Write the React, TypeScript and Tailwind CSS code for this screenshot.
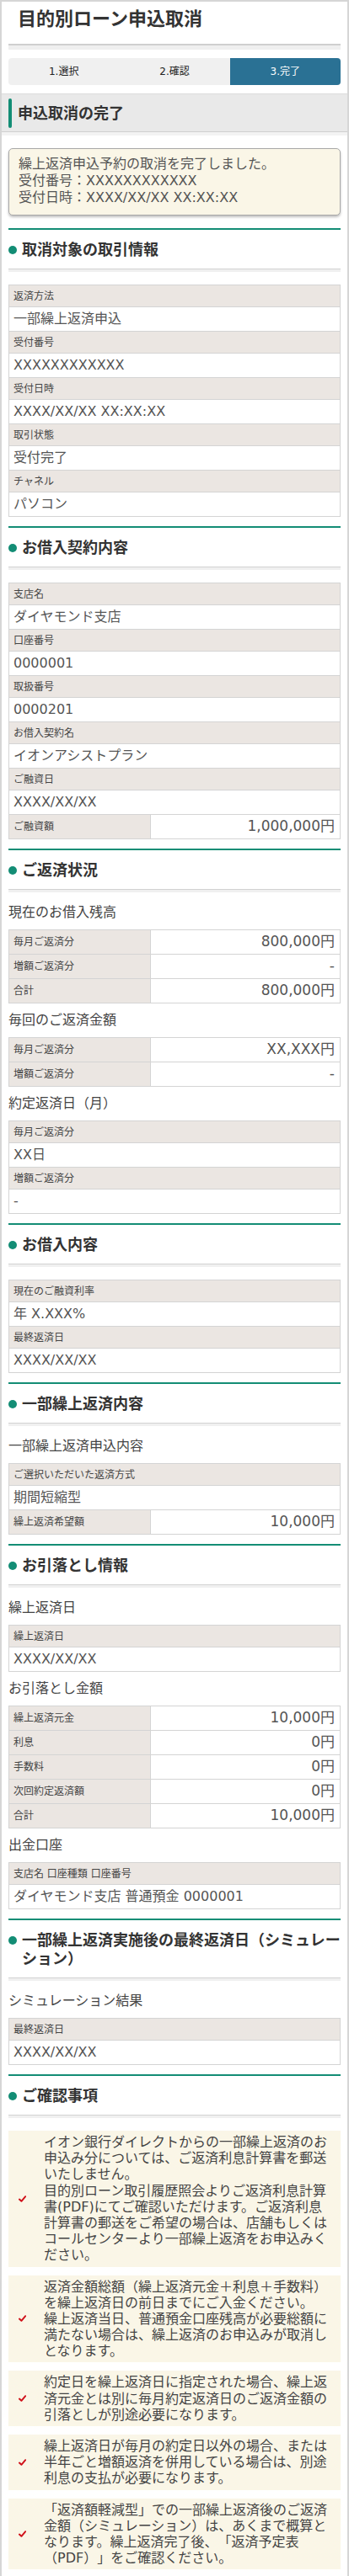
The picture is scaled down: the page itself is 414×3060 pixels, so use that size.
import React from "react";

type Row = { label: string; value: string; inline?: boolean };

const InfoTable = ({ rows, className = "" }: { rows: Row[]; className?: string }) => (
  <div className={`border-x border-t border-[#d4d4d4] ${className}`}>
    {rows.map((row, i) =>
      row.inline ? (
        <div key={i} className="flex h-[29px] border-b border-[#d4d4d4]">
          <div className="flex w-[168px] shrink-0 items-center border-r border-[#d4d4d4] bg-[#ebe6e2] px-[5px] text-[12px] text-[#444]">
            {row.label}
          </div>
          <div className="flex flex-1 items-center justify-end bg-white pr-[6px] text-[17px] text-[#555]">
            {row.value}
          </div>
        </div>
      ) : (
        <div key={i}>
          <div className="flex h-[26px] items-center border-b border-[#d4d4d4] bg-[#ebe6e2] px-[5px] text-[12px] text-[#444]">
            {row.label}
          </div>
          <div className="flex h-[29px] items-center border-b border-[#d4d4d4] bg-white px-[5px] text-[16px] text-[#555]">
            {row.value}
          </div>
        </div>
      )
    )}
  </div>
);

const Heading = ({ title, gap = "mt-[11px]" }: { title: React.ReactNode; gap?: string }) => (
  <div className={gap}>
    <div className="h-[2px] bg-[#138d75]" />
    <div className="flex items-start gap-[6px] border-b border-[#d2d2d2] pt-[13px] pb-[11px]">
      <span className="mt-[6px] size-[10px] shrink-0 rounded-full bg-[#138d75]" />
      <h2 className="-mr-[4px] text-[18px] font-bold leading-[22px] text-[#333]">{title}</h2>
    </div>
    <div className="h-[3px] bg-[#f0f0f0]" />
  </div>
);

const Sub = ({ children, first = false }: { children: React.ReactNode; first?: boolean }) => (
  <p className={`${first ? "mt-3" : "mt-2"} mb-2 text-[16px] leading-6 text-[#444]`}>{children}</p>
);

const Check = () => (
  <svg width="9" height="8" viewBox="0 0 9 8" className="shrink-0">
    <path d="M1 4.6 L3.4 6.8 L8.2 1.2" fill="none" stroke="#d0121b" strokeWidth="2" strokeLinecap="round" strokeLinejoin="round" />
  </svg>
);

const Note = ({ children }: { children: React.ReactNode }) => (
  <div className="flex items-center bg-[#faf6e7] py-1 pl-[12px] pr-[14px]">
    <Check />
    <p className="ml-[21px] text-[16px] leading-[1.2] text-[#444]">{children}</p>
  </div>
);

const steps = ["1.選択", "2.確認", "3.完了"];

export default function App() {
  return (
    <div className="min-h-screen bg-white font-['DejaVu_Sans','Noto_Sans_CJK_JP',sans-serif] [text-spacing-trim:space-all]">
      <div className="border-2 border-[#d6d6d6] px-2 pb-[13px]">
        {/* page title */}
        <h1 className="border-b-2 border-[#cfcfcf] pt-[6px] pb-[14px] pl-[11px] text-[22px] font-bold leading-[30px] text-[#333]">
          目的別ローン申込取消
        </h1>
        <div className="h-[5px] bg-[#efefef]" />

        {/* steps */}
        <div className="mt-[10px] grid h-[32px] grid-cols-3 overflow-hidden rounded-[4px] bg-[#f0f0f0] text-[12px]">
          {steps.map((s, i) => (
            <div
              key={s}
              className={`flex items-center justify-center ${i === 2 ? "bg-[#2a7194] text-white" : "text-[#222]"}`}
            >
              {s}
            </div>
          ))}
        </div>

        {/* complete band */}
        <div className="-mx-2 mt-[10px]">
          <div className="flex h-[46px] items-center border-y border-t-[#dcdcdc] border-b-[#d0d0d0] bg-[#e9e9e9]">
            <span className="ml-2 h-[35px] w-[4px] rounded-full bg-[#138d75]" />
            <h2 className="ml-[7px] text-[18px] font-bold text-[#333]">申込取消の完了</h2>
          </div>
          <div className="h-[4px] bg-[#f3f3f3]" />
        </div>

        <div className="mt-[15px] rounded-[5px] border border-[#a8a8a8] bg-[#faf6e7] px-[11px] pt-2 pb-[10px] text-[16px] leading-5 text-[#555] shadow-[0_2px_3px_rgba(0,0,0,0.25)]">
          <p>繰上返済申込予約の取消を完了しました。</p>
          <p>受付番号：XXXXXXXXXXXX</p>
          <p>受付日時：XXXX/XX/XX XX:XX:XX</p>
        </div>

        <Heading title="取消対象の取引情報" gap="mt-[15px]" />
        <InfoTable
          className="mt-[15px]"
          rows={[
            { label: "返済方法", value: "一部繰上返済申込" },
            { label: "受付番号", value: "XXXXXXXXXXXX" },
            { label: "受付日時", value: "XXXX/XX/XX XX:XX:XX" },
            { label: "取引状態", value: "受付完了" },
            { label: "チャネル", value: "パソコン" },
          ]}
        />

        <Heading title="お借入契約内容" />
        <InfoTable
          className="mt-[15px]"
          rows={[
            { label: "支店名", value: "ダイヤモンド支店" },
            { label: "口座番号", value: "0000001" },
            { label: "取扱番号", value: "0000201" },
            { label: "お借入契約名", value: "イオンアシストプラン" },
            { label: "ご融資日", value: "XXXX/XX/XX" },
            { label: "ご融資額", value: "1,000,000円", inline: true },
          ]}
        />

        <Heading title="ご返済状況" />
        <Sub first>現在のお借入残高</Sub>
        <InfoTable
          rows={[
            { label: "毎月ご返済分", value: "800,000円", inline: true },
            { label: "増額ご返済分", value: "-", inline: true },
            { label: "合計", value: "800,000円", inline: true },
          ]}
        />
        <Sub>毎回のご返済金額</Sub>
        <InfoTable
          rows={[
            { label: "毎月ご返済分", value: "XX,XXX円", inline: true },
            { label: "増額ご返済分", value: "-", inline: true },
          ]}
        />
        <Sub>約定返済日（月）</Sub>
        <InfoTable
          rows={[
            { label: "毎月ご返済分", value: "XX日" },
            { label: "増額ご返済分", value: "-" },
          ]}
        />

        <Heading title="お借入内容" />
        <InfoTable
          className="mt-[15px]"
          rows={[
            { label: "現在のご融資利率", value: "年 X.XXX%" },
            { label: "最終返済日", value: "XXXX/XX/XX" },
          ]}
        />

        <Heading title="一部繰上返済内容" />
        <Sub first>一部繰上返済申込内容</Sub>
        <InfoTable
          rows={[
            { label: "ご選択いただいた返済方式", value: "期間短縮型" },
            { label: "繰上返済希望額", value: "10,000円", inline: true },
          ]}
        />

        <Heading title="お引落とし情報" />
        <Sub first>繰上返済日</Sub>
        <InfoTable rows={[{ label: "繰上返済日", value: "XXXX/XX/XX" }]} />
        <Sub>お引落とし金額</Sub>
        <InfoTable
          rows={[
            { label: "繰上返済元金", value: "10,000円", inline: true },
            { label: "利息", value: "0円", inline: true },
            { label: "手数料", value: "0円", inline: true },
            { label: "次回約定返済額", value: "0円", inline: true },
            { label: "合計", value: "10,000円", inline: true },
          ]}
        />
        <Sub>出金口座</Sub>
        <InfoTable rows={[{ label: "支店名 口座種類 口座番号", value: "ダイヤモンド支店 普通預金 0000001" }]} />

        <Heading
          title={
            <>
              一部繰上返済実施後の最終返済日（シミュレー
              <br />
              ション）
            </>
          }
        />
        <Sub first>シミュレーション結果</Sub>
        <InfoTable rows={[{ label: "最終返済日", value: "XXXX/XX/XX" }]} />

        <Heading title="ご確認事項" />
        <div className="mt-[15px] flex flex-col gap-[10px]">
          <Note>
            イオン銀行ダイレクトからの一部繰上返済のお申込み分については、ご返済利息計算書を郵送いたしません。
            <br />
            目的別ローン取引履歴照会よりご返済利息計算書(PDF)にてご確認いただけます。ご返済利息計算書の郵送をご希望の場合は、店舗もしくはコールセンターより一部繰上返済をお申込みください。
          </Note>
          <Note>
            返済金額総額（繰上返済元金＋利息＋手数料）を繰上返済日の前日までにご入金ください。
            <br />
            繰上返済当日、普通預金口座残高が必要総額に満たない場合は、繰上返済のお申込みが取消しとなります。
          </Note>
          <Note>約定日を繰上返済日に指定された場合、繰上返済元金とは別に毎月約定返済日のご返済金額の引落としが別途必要になります。</Note>
          <Note>繰上返済日が毎月の約定日以外の場合、または半年ごと増額返済を併用している場合は、別途利息の支払が必要になります。</Note>
          <Note>「返済額軽減型」での一部繰上返済後のご返済金額（シミュレーション）は、あくまで概算となります。繰上返済完了後、「返済予定表（PDF）」をご確認ください。</Note>
        </div>
      </div>
    </div>
  );
}
